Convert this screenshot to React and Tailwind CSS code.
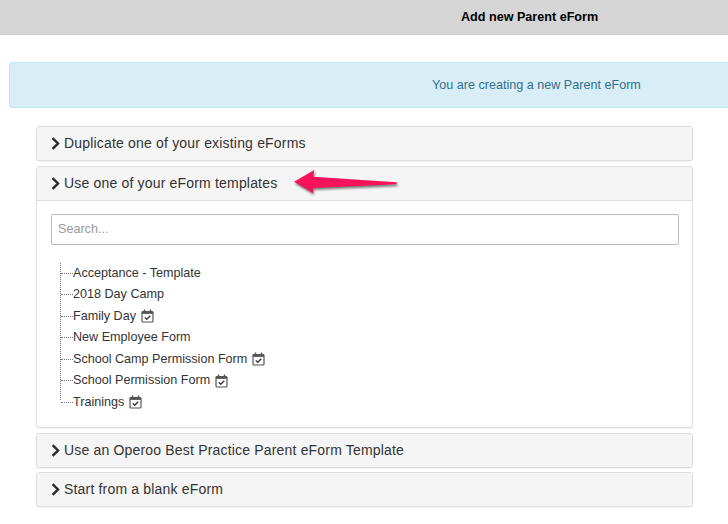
const font = { fontFamily: '"Liberation Sans", Arial, sans-serif' };

function Chevron() {
  return (
    <svg width="9" height="13" viewBox="0 0 9 13" className="shrink-0">
      <path d="M1.6 1.2 L7 6.5 L1.6 11.8" fill="none" stroke="#2b2b2b" strokeWidth="2.4" />
    </svg>
  );
}

function Cal() {
  return (
    <svg width="13" height="14" viewBox="0 0 13 14" className="shrink-0">
      <rect x="1" y="2.5" width="11" height="10.5" rx="1" fill="#fff" stroke="#555" strokeWidth="1.2" />
      <rect x="1" y="2.5" width="11" height="2.4" fill="#555" />
      <path d="M3.5 0.5v2.5M9.5 0.5v2.5" stroke="#555" strokeWidth="1.4" />
      <path d="M3.8 8.4l1.9 1.9 3.6-3.6" fill="none" stroke="#333" strokeWidth="1.3" />
    </svg>
  );
}

function Panel({ title, children }) {
  return (
    <div className="rounded-[3px] border border-[#dddddd] shadow-[0_1px_1px_rgba(0,0,0,0.05)] bg-white overflow-hidden">
      <div className="h-[33px] bg-[#f5f5f5] flex items-center gap-[4px] pl-[14px] text-[14px] tracking-[0.18px] text-[#333333]">
        <Chevron />
        <span>{title}</span>
      </div>
      {children}
    </div>
  );
}

const items = [
  ['Acceptance - Template', false],
  ['2018 Day Camp', false],
  ['Family Day', true],
  ['New Employee Form', false],
  ['School Camp Permission Form', true],
  ['School Permission Form', true],
  ['Trainings', true],
];

export default function App() {
  return (
    <div className="w-[728px] h-[524px] overflow-hidden bg-white" style={font}>
      <div className="h-[35px] bg-[#d5d5d5] flex items-center pl-[461px] text-[12.6px] font-bold text-black">
        Add new Parent eForm
      </div>
      <div className="ml-[9px] mt-[27px] w-[900px] h-[46px] rounded-[3px] border border-[#bce8f1] bg-[#d9edf7] text-[#31708f] flex items-center pl-[422px] text-[12.6px]">
        You are creating a new Parent eForm
      </div>
      <div className="ml-[36px] w-[657px] mt-[18px] flex flex-col">
        <Panel title="Duplicate one of your existing eForms" />
        <div className="relative mt-[5px]">
          <Panel title="Use one of your eForm templates">
            <div className="border-t border-[#dddddd] h-[227px] pl-[14px] pr-[13px] pt-[13px]">
              <div className="h-[31px] border border-[#bbbbbb] rounded-[2px] flex items-center pl-[6px] pb-[1px] text-[12.6px] text-[#999999]">
                Search...
              </div>
              <ul className="mt-[17.5px] ml-[9px] border-l border-dotted border-[#777777] w-fit h-[137px]">
                {items.map(([t, c]) => (
                  <li key={t} className="h-[21.5px] flex items-center gap-[5px] text-[12.6px] text-[#333333] whitespace-nowrap">
                    <span className="w-[12px] border-t border-dotted border-[#777777] -mr-[5px]" />
                    <span>{t}</span>
                    {c && <Cal />}
                  </li>
                ))}
              </ul>
            </div>
          </Panel>
          <svg width="110" height="34" viewBox="0 0 110 34" className="absolute left-[256px] top-0 drop-shadow-[1px_2px_1px_rgba(0,0,0,0.5)]">
            <path d="M2 15.7 L22.3 4 L21 10.7 L104.7 16.3 L104.7 18.3 L21 22 L21 27 Z" fill="#f7125c" />
          </svg>
        </div>
        <div className="mt-[5px]">
          <Panel title="Use an Operoo Best Practice Parent eForm Template" />
        </div>
        <div className="mt-[4px]">
          <Panel title="Start from a blank eForm" />
        </div>
      </div>
    </div>
  );
}
